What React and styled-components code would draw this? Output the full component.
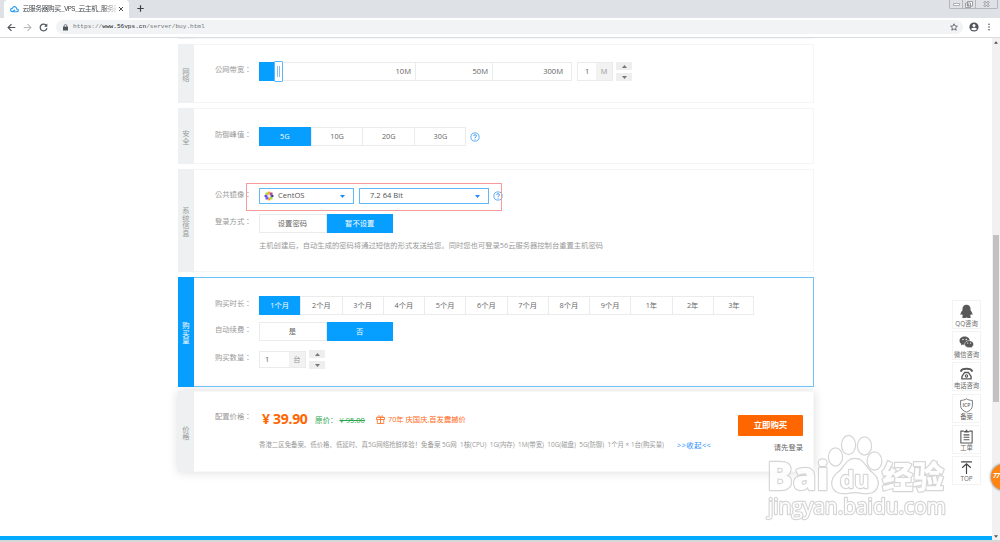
import React from 'react';
import styled, { createGlobalStyle } from 'styled-components';

const GlobalStyle = createGlobalStyle`
  body {
    margin: 0;
    overflow: hidden;
    background: #fff;
    font-family: 'Open Sans', 'Noto Sans CJK SC', sans-serif;
    font-size: 7.3px;
    line-height: 1;
    color: #666;
  }
  * {
    box-sizing: border-box;
  }
  svg {
    display: block;
    flex: none;
  }
`;

const Window = styled.div`
  position: relative;
  width: 1000px;
  height: 542px;
  overflow: hidden;
  display: flex;
  flex-direction: column;
`;

/* browser chrome */

const TabStrip = styled.div`
  height: 18px;
  flex: none;
  background: #dee1e6;
  display: flex;
  align-items: flex-start;
`;

const Tab = styled.div`
  margin-left: 4px;
  width: 125px;
  height: 18px;
  padding: 0 5px 0 6px;
  border-radius: 4px 4px 0 0;
  background: #fff;
  display: flex;
  align-items: center;
  justify-content: space-between;
`;

const TabTitle = styled.span`
  width: 94px;
  padding-left: 1px;
  white-space: nowrap;
  line-height: 12px;
  font-family: 'Liberation Mono', 'Noto Sans CJK SC', monospace;
  font-size: 6.9px;
  letter-spacing: -0.55px;
  color: #45494d;
  mask-image: linear-gradient(to right, #000 86%, rgba(0, 0, 0, 0.2));
`;

const NewTab = styled.span`
  margin: 5px 0 0 8px;
`;

const WindowButtons = styled.div`
  margin-left: auto;
  margin-right: 2px;
  height: 9px;
  display: flex;
  border: 1px solid #b3b6ba;
  border-top: 0;
  border-radius: 0 0 2px 2px;
`;

const WindowButton = styled.span`
  width: ${(props) => props.$width}px;
  display: flex;
  align-items: center;
  justify-content: center;

  & + & {
    border-left: 1px solid #b3b6ba;
  }
`;

const Toolbar = styled.div`
  height: 20px;
  flex: none;
  padding: 0 7px 1px;
  border-bottom: 1px solid #dadcdd;
  background: #fff;
  display: flex;
  align-items: center;
`;

const NavIcons = styled.div`
  width: 49px;
  display: flex;
  gap: 7px;
`;

const AddressBar = styled.div`
  flex: 1;
  height: 14px;
  padding: 0 5px 0 7px;
  border-radius: 7px;
  background: #f1f3f4;
  display: flex;
  align-items: center;
`;

const Url = styled.span`
  margin-left: 5px;
  padding-top: 1px;
  flex: 1;
  font-family: 'Liberation Mono', monospace;
  font-size: 6.1px;
  color: #6f757a;

  b {
    font-weight: 400;
    color: #202124;
  }
`;

const ToolbarIcons = styled.div`
  margin-left: 6px;
  display: flex;
  align-items: center;
  gap: 6px;
`;

/* page */

const Page = styled.div`
  flex: 1;
  min-height: 0;
  display: flex;
`;

const Viewport = styled.div`
  flex: 1;
  display: flex;
  flex-direction: column;
  overflow: hidden;
`;

const Content = styled.div`
  flex: 1;
  width: 636px;
  margin-left: 178px;
`;

const FooterBar = styled.div`
  height: 4px;
  background: #00aaff;
`;

const Taskbar = styled.div`
  height: 2px;
  flex: none;
  background: #d6d7d7;
`;

const Scrollbar = styled.div`
  width: 8px;
  background: #f1f1f1;
  display: flex;
  flex-direction: column;
  align-items: center;
  justify-content: space-between;
  padding: 3px 0 2px;
`;

const ScrollThumb = styled.div`
  width: 6px;
  height: 167px;
  margin-top: 58px;
  background: #c1c1c1;
`;

const PanelStub = styled.div`
  height: 1px;
  margin-bottom: 5px;
  border-left: 16px solid #edf1f1;
  background: #f7f7f7;
`;

const Panel = styled.section`
  height: ${(props) => props.$height}px;
  margin-bottom: ${(props) => props.$gap || 5}px;
  display: flex;
  background: #fff;
  box-shadow: ${(props) => (props.$raised ? '0 0 10px rgba(0, 0, 0, 0.14)' : 'none')};
`;

const PanelTitle = styled.div`
  width: 16px;
  flex: none;
  display: flex;
  align-items: center;
  justify-content: center;
  text-align: center;
  padding: 3px 4px 0;
  line-height: 7.5px;
  word-break: break-all;
  background: ${(props) => (props.$active ? '#069eff' : '#edf1f1')};
  color: ${(props) => (props.$active ? '#fff' : '#999')};
`;

const PanelBody = styled.div`
  position: relative;
  flex: 1;
  padding: ${(props) => props.$top}px 0 0 20px;
  border: 1px solid ${(props) => (props.$active ? '#6cc4fa' : '#f5f5f5')};
  border-left: 0;
`;

const Row = styled.div`
  height: ${(props) => props.$height || 19}px;
  margin-bottom: ${(props) => props.$gap || 0}px;
  display: flex;
  align-items: center;
`;

/* the TC face centres the full-width colon */
const Label = styled.span`
  width: 45px;
  flex: none;
  padding: 0 0 3px 1px;
  font-family: 'Noto Sans CJK TC', sans-serif;
  white-space: nowrap;
  color: #999;
`;

const ButtonGroup = styled.div`
  height: 100%;
  display: flex;
  border: 1px solid #ebebeb;
`;

const OptionButton = styled.div`
  width: ${(props) => props.$width}px;
  margin: -1px 0;
  display: flex;
  align-items: center;
  justify-content: center;
  color: ${(props) => (props.$selected ? '#fff' : '#666')};
  background: ${(props) => (props.$selected ? '#069eff' : 'transparent')};

  &:first-child {
    margin-left: -1px;
  }
  &:last-child {
    margin-right: -1px;
  }
  & + & {
    border-left: 1px solid ${(props) => (props.$selected ? '#069eff' : '#ebebeb')};
  }
`;

const Slider = styled.div`
  width: 313px;
  height: 19px;
  border: 1px solid #ebebeb;
  display: flex;
  align-items: center;
`;

const SliderFill = styled.div`
  width: 16px;
  height: 19px;
  margin-left: -1px;
  background: #069eff;
`;

const SliderHandle = styled.div`
  width: 9px;
  height: 21px;
  margin-left: -1px;
  border: 1px solid #5eb6f8;
  border-radius: 1px;
  background: #fff;
  display: flex;
  align-items: center;
  justify-content: center;
  gap: 1px;

  &::before,
  &::after {
    content: '';
    width: 1px;
    height: 11px;
    background: #8dbcf0;
  }
`;

const SliderStop = styled.div`
  width: ${(props) => props.$width}px;
  height: 17px;
  padding: 1px ${(props) => props.$pad || 4}px 0 0;
  display: flex;
  align-items: center;
  justify-content: flex-end;
  font-size: 7.6px;

  & + & {
    border-left: 1px solid #ebebeb;
  }
`;

const NumberBox = styled.div`
  width: ${(props) => props.$width}px;
  height: ${(props) => props.$height}px;
  margin-left: ${(props) => props.$left || 0}px;
  border: 1px solid #ebebeb;
  display: flex;
`;

const NumberValue = styled.span`
  flex: 1;
  display: flex;
  align-items: center;
  padding: 1px 0 0 ${(props) => props.$pad}px;
  font-size: 7.6px;
`;

const NumberUnit = styled.span`
  width: 16px;
  display: flex;
  align-items: center;
  justify-content: center;
  background: #f2f2f2;
  color: #999;
`;

const Steppers = styled.div`
  margin-left: 3px;
  display: flex;
  flex-direction: column;
  gap: 3px;
`;

const Step = styled.div`
  width: 16px;
  height: 8px;
  background: #eee;
  display: flex;
  align-items: center;
  justify-content: center;
`;

const Select = styled.div`
  width: ${(props) => props.$width}px;
  height: 16px;
  margin-right: 5px;
  padding: 0 8px 0 ${(props) => props.$pad}px;
  border: 1px solid #5fbbf7;
  display: flex;
  align-items: center;
  gap: 4px;
  font-size: 7.6px;
  color: #555;

  svg:last-child {
    margin-left: auto;
  }
`;

const Hint = styled.p`
  margin: 9px 0 0 45px;
  font-size: 7.31px;
  white-space: nowrap;
  color: #999;
`;

/* red frame drawn round the image pickers */
const Highlight = styled.div`
  position: absolute;
  left: 52px;
  top: 13px;
  width: 256px;
  height: 28px;
  border: 1px solid #f79a9a;
`;

const PriceBody = styled(PanelBody)`
  display: flex;
  justify-content: space-between;
  padding-right: 10px;
  border-color: #f8f8f8;
`;

const PriceRow = styled(Row)`
  color: #ff6a1a;
`;

const Price = styled.strong`
  width: 56px;
  padding-left: 3px;
  font-size: 14px;
  letter-spacing: -0.3px;
  white-space: nowrap;
  color: #ff6600;
`;

const OriginalPrice = styled.span`
  width: 61px;
  padding-top: 4px;
  white-space: nowrap;
  font-size: 7.5px;
  color: #2ba64b;
`;

const Promo = styled.span`
  padding-top: 2px;
  display: flex;
  align-items: center;
  gap: 3px;
  white-space: nowrap;
`;

const Summary = styled.div`
  margin: 14px 0 0 45px;
  display: flex;
  align-items: center;
  white-space: pre;
  font-size: 6.42px;
  color: #999;
`;

const SummaryText = styled.span`
  width: 418px;
`;

const Collapse = styled.span`
  font-size: 7.3px;
  letter-spacing: 0.5px;
  color: #1a8cff;
`;

const Checkout = styled.div`
  padding-top: 6px;
  display: flex;
  flex-direction: column;
  align-items: flex-end;
`;

const BuyButton = styled.div`
  width: 65px;
  height: 21px;
  margin-bottom: 8px;
  border-radius: 1px;
  background: #ff6600;
  color: #fff;
  font-size: 8.4px;
  font-weight: 700;
  display: flex;
  align-items: center;
  justify-content: center;
`;

/* floating parts */

const SideMenu = styled.div`
  position: absolute;
  left: 952px;
  top: 300px;
  display: flex;
  flex-direction: column;
  gap: 2.2px;
`;

const SideItem = styled.div`
  width: 29px;
  height: 29px;
  padding-top: 3px;
  border: 1px solid #f3f3f3;
  background: #fff;
  display: flex;
  flex-direction: column;
  align-items: center;
  gap: 1.5px;
  font-size: 6.3px;
  white-space: nowrap;
  color: #666;
`;

const Badge = styled.div`
  position: absolute;
  left: 991px;
  top: 464px;
  width: 26px;
  height: 26px;
  padding: 9px 0 0 2px;
  border-radius: 50%;
  background: #ff8412;
  box-shadow: 0 0 2px 1px rgba(90, 90, 90, 0.5);
  font-size: 6.5px;
  font-style: italic;
  font-weight: 700;
  letter-spacing: -0.3px;
  color: #fff;
`;

const Watermark = styled.svg`
  position: absolute;
  left: 760px;
  top: 428px;
  opacity: 0.85;
`;

const HelpIcon = ({ left = 0 }) => (
  <svg width='10' height='10' viewBox='0 0 10 10' style={{ marginLeft: left }}>
    <circle cx='5' cy='5' r='4.1' fill='none' stroke='#4aa5f5' strokeWidth='0.9' />
    <path
      d='M3.7 4.1c0-1.9 2.7-1.8 2.7-.1C6.4 5 5 4.9 5 6.1M5 6.8v.8'
      fill='none'
      stroke='#2f8fe8'
      strokeWidth='1'
    />
  </svg>
);

const Caret = ({ up, color = '#777', size = 5 }) => (
  <svg width={size} height='3' viewBox='0 0 6 3.6'>
    <path d={up ? 'M0 3.6L3 0l3 3.6z' : 'M0 0h6L3 3.6z'} fill={color} />
  </svg>
);

const StepperPair = () => (
  <Steppers>
    <Step>
      <Caret up />
    </Step>
    <Step>
      <Caret />
    </Step>
  </Steppers>
);

const CentosIcon = () => (
  <svg width='10' height='10' viewBox='0 0 20 20'>
    <path d='M10 0l3 3.500L10 8 7 3.500z' fill='#f0a030' />
    <path d='M20 10l-3.500 3L12 10l4.500-3z' fill='#3c3bb0' />
    <path d='M10 20l-3-3.500L10 12l3 4.500z' fill='#f0a030' />
    <path d='M0 10l3.500-3L8 10l-4.500 3z' fill='#6a3fe0' />
    <path d='M3 3h4.500l1.500 6L3 7.500z' fill='#a8dc3a' />
    <path d='M17 3v4.500L11 9l1.500-6z' fill='#b04aa0' />
    <path d='M17 17h-4.500L11 11l6 1.500z' fill='#a8dc3a' />
    <path d='M3 17v-4.500L9 11l-1.500 6z' fill='#6a5cf0' />
  </svg>
);

const GiftIcon = () => (
  <svg width='9' height='9' viewBox='0 0 18 18' fill='none' stroke='#ff6a1a' strokeWidth='1.6'>
    <path d='M1 5h16v4H1zM2.500 9v8h13V9M9 5v12M9 5C7-.5 3 .8 4.500 5M9 5c2-5.500 6-4.200 4.500 0' />
  </svg>
);

const sideItems = [
  {
    text: 'QQ咨询',
    icon: (
      <path
        d='M14 1.500c-4.800 0-7.500 3.200-7.500 7.500v2.500C4.500 14 2.500 17 2.900 20c.2 1 1.400.2 2.600-1.200.4 1.600 1.200 2.800 2.200 3.700-2.800 1-2.500 3.500.5 3.500 2.300 0 4.500-.3 5.800-1 1.300.7 3.500 1 5.800 1 3 0 3.300-2.500.5-3.500 1-.9 1.800-2.100 2.200-3.700 1.200 1.400 2.400 2.200 2.600 1.200.4-3-1.600-6-3.600-8.500V9c0-4.300-2.700-7.500-7.500-7.500z'
        fill='#595959'
      />
    ),
  },
  {
    text: '微信咨询',
    icon: (
      <g>
        <path
          d='M10.500 3C5 3 1 6.400 1 10.700c0 2.500 1.300 4.500 3.400 6L3.500 19.500l3.400-1.700c1.300.4 2.400.5 3.600.5C16 18.300 20 15 20 10.700S16 3 10.500 3z'
          fill='#595959'
        />
        <path
          d='M19 10.500c-4.800 0-8.500 2.900-8.500 6.600s3.700 6.600 8.500 6.600c1 0 2-.2 2.900-.5l3 1.600-.8-2.500c2-1.300 3.200-3.100 3.200-5.200 0-3.700-3.500-6.600-8.300-6.600z'
          fill='#595959'
          stroke='#fff'
        />
        <g fill='#fff'>
          <circle cx='7.500' cy='8.500' r='1.300' />
          <circle cx='13.500' cy='8.500' r='1.300' />
          <circle cx='16.300' cy='15' r='1.100' />
          <circle cx='21.600' cy='15' r='1.100' />
        </g>
      </g>
    ),
  },
  {
    text: '电话咨询',
    icon: (
      <g fill='none' stroke='#595959'>
        <path d='M4 10.500V8.500C7 4 21 4 24 8.500v2' strokeWidth='3.600' />
        <path d='M10.500 12h7l5 7.500V24h-17v-4.500z' strokeWidth='2.600' />
        <circle cx='14' cy='18.500' r='2.200' strokeWidth='2.200' />
      </g>
    ),
  },
  {
    text: '备案',
    icon: (
      <g fill='none' stroke='#666' strokeWidth='1.600'>
        <path d='M14 1.500c3 2.200 7 3 11 3V14c0 6-4.500 10-11 12.500C7.500 24 3 20 3 14V4.500c4 0 8-.8 11-3z' />
        <text
          x='14'
          y='17'
          textAnchor='middle'
          fontSize='9.500'
          fontWeight='600'
          fill='#666'
          stroke='none'
        >
          ICP
        </text>
      </g>
    ),
  },
  {
    text: '工单',
    icon: (
      <g fill='none' stroke='#555' strokeWidth='2'>
        <path d='M9 4H3.500v22h21V4H19M8.500 11h11M8.500 15.500h11M8.500 20h11' />
        <path d='M9.500 6.500V3.500h3V1.500h3v2h3v3z' fill='#555' stroke='none' />
      </g>
    ),
  },
  {
    text: 'TOP',
    icon: (
      <path
        d='M4 3.500h20M14 26V7M6 14.500L14 7l8 7.500'
        fill='none'
        stroke='#444'
        strokeWidth='2.200'
      />
    ),
  },
];

const months = ['1个月', '2个月', '3个月', '4个月', '5个月', '6个月', '7个月', '8个月', '9个月', '1年', '2年', '3年'];

function Options({ items, selected, width }) {
  return (
    <ButtonGroup>
      {items.map((item) => (
        <OptionButton key={item} $width={width} $selected={item === selected}>
          {item}
        </OptionButton>
      ))}
    </ButtonGroup>
  );
}

function BrowserChrome() {
  return (
    <>
      <TabStrip>
        <Tab>
          <svg width='9' height='8' viewBox='0 0 18 14' fill='none' stroke='#2a9df4' strokeWidth='2.4'>
            <path d='M5 12.500h9c4-1 3-6-.5-5.500C13 1 6 .5 5 5.500c-5 0-5 6.500 0 7l5-4' />
          </svg>
          <TabTitle>云服务器购买_VPS_云主机_服务器</TabTitle>
          <svg width='6' height='6' viewBox='0 0 6 6' stroke='#4d5156' strokeWidth='1'>
            <path d='M1 1l4 4M5 1L1 5' />
          </svg>
        </Tab>
        <NewTab>
          <svg width='7' height='7' viewBox='0 0 7 7' stroke='#3c4043' strokeWidth='1.200'>
            <path d='M3.500 .3v6.400M.3 3.500h6.400' />
          </svg>
        </NewTab>
        <WindowButtons>
          <WindowButton $width={12}>
            <svg width='7' height='3' viewBox='0 0 7 3' fill='#fff' stroke='#8a8d91' strokeWidth='.7'>
              <rect x='.4' y='.4' width='6.200' height='2.200' rx='.6' />
            </svg>
          </WindowButton>
          <WindowButton $width={13}>
            <svg width='8' height='7' viewBox='0 0 8 7' fill='#fff' stroke='#8a8d91' strokeWidth='.8'>
              <path d='M2.500.5h5v4.500h-5zM.5 2h5v4.500h-5zM2 3.500h2v1.500H2z' />
            </svg>
          </WindowButton>
          <WindowButton $width={22}>
            <svg width='7' height='6' viewBox='0 0 7 6' fill='none'>
              <path d='M1 .5l5 5M6 .5l-5 5' stroke='#8a8d91' strokeWidth='2.200' />
              <path d='M1 .5l5 5M6 .5l-5 5' stroke='#fff' strokeWidth='1' />
            </svg>
          </WindowButton>
        </WindowButtons>
      </TabStrip>
      <Toolbar>
        <NavIcons>
          <svg width='9' height='9' viewBox='0 0 9 9' fill='none' stroke='#50545a' strokeWidth='1.200'>
            <path d='M8.300 4.500H1.200M4.500 1.100L1.100 4.500l3.400 3.400' />
          </svg>
          <svg width='9' height='9' viewBox='0 0 9 9' fill='none' stroke='#b9bbbe' strokeWidth='1.100'>
            <path d='M.7 4.500h7.100M4.500 1.100l3.400 3.400-3.400 3.400' />
          </svg>
          <svg width='9' height='9' viewBox='0 0 9 9' fill='none' stroke='#50545a' strokeWidth='1.200'>
            <path d='M7.400 2.600A3.400 3.400 0 1 0 7.900 5.200' />
            <path d='M8.300.6v3.200H5.100z' fill='#50545a' stroke='none' />
          </svg>
        </NavIcons>
        <AddressBar>
          <svg width='5' height='7' viewBox='0 0 5 7'>
            <path d='M0 2.600h5V6.500H0z' fill='#50545a' />
            <path d='M1.200 3V1.800a1.300 1.300 0 0 1 2.600 0V3' fill='none' stroke='#50545a' strokeWidth='.7' />
          </svg>
          <Url>
            https://<b>www.56vps.cn</b>/server/buy.html
          </Url>
          <svg width='8' height='8' viewBox='0 0 8 8' fill='none' stroke='#50545a' strokeWidth='.8'>
            <path d='M4 .8l1 2.200 2.400.2-1.800 1.600.6 2.400L4 6 1.800 7.200l.6-2.400L.6 3.200 3 3z' />
          </svg>
        </AddressBar>
        <ToolbarIcons>
          <svg width='10' height='10' viewBox='0 0 10 10'>
            <circle cx='5' cy='5' r='4.600' fill='#50545a' />
            <circle cx='5' cy='3.500' r='1.500' fill='#fff' />
            <path d='M2 7c1-1.600 5-1.600 6 0-1 1.800-5 1.800-6 0z' fill='#fff' />
          </svg>
          <svg width='8' height='8' viewBox='0 0 8 8' fill='#50545a'>
            <circle cx='4' cy='1.200' r='.8' />
            <circle cx='4' cy='4' r='.8' />
            <circle cx='4' cy='6.800' r='.8' />
          </svg>
        </ToolbarIcons>
      </Toolbar>
    </>
  );
}

function App() {
  return (
    <Window>
      <GlobalStyle />
      <BrowserChrome />
      <Page>
        <Viewport>
          <Content>
            <PanelStub />

            <Panel $height={59}>
              <PanelTitle>网络</PanelTitle>
              <PanelBody $top={17}>
                <Row>
                  <Label>公网带宽：</Label>
                  <Slider>
                    <SliderFill />
                    <SliderHandle />
                    <SliderStop $width={132}>10M</SliderStop>
                    <SliderStop $width={77}>50M</SliderStop>
                    <SliderStop $width={79} $pad={8}>
                      300M
                    </SliderStop>
                  </Slider>
                  <NumberBox $width={36} $height={19} $left={5}>
                    <NumberValue $pad={7}>1</NumberValue>
                    <NumberUnit>M</NumberUnit>
                  </NumberBox>
                  <StepperPair />
                </Row>
              </PanelBody>
            </Panel>

            <Panel $height={56}>
              <PanelTitle>安全</PanelTitle>
              <PanelBody $top={18}>
                <Row>
                  <Label>防御峰值：</Label>
                  <Options items={['5G', '10G', '20G', '30G']} selected='5G' width={51.7} />
                  <HelpIcon left={4} />
                </Row>
              </PanelBody>
            </Panel>

            <Panel $height={103}>
              <PanelTitle>系统信息</PanelTitle>
              <PanelBody $top={18}>
                <Row $height={16} $gap={10}>
                  <Label>公共镜像：</Label>
                  <Select $width={95} $pad={4}>
                    <CentosIcon />
                    CentOS
                    <Caret color='#1a8cff' />
                  </Select>
                  <Select $width={130} $pad={10}>
                    7.2 64 Bit
                    <Caret color='#1a8cff' />
                  </Select>
                  <HelpIcon left={-1} />
                </Row>
                <Highlight />
                <Row>
                  <Label>登录方式：</Label>
                  <Options items={['设置密码', '暂不设置']} selected='暂不设置' width={66.8} />
                </Row>
                <Hint>主机创建后，自动生成的密码将通过短信的形式发送给您。同时您也可登录56云服务器控制台重置主机密码</Hint>
              </PanelBody>
            </Panel>

            <Panel $height={110} $gap={4}>
              <PanelTitle $active>购买量</PanelTitle>
              <PanelBody $active $top={18}>
                <Row $gap={7}>
                  <Label>购买时长：</Label>
                  <Options items={months} selected='1个月' width={41.25} />
                </Row>
                <Row $gap={9}>
                  <Label>自动续费：</Label>
                  <Options items={['是', '否']} selected='否' width={66.8} />
                </Row>
                <Row>
                  <Label>购买数量：</Label>
                  <NumberBox $width={47} $height={17}>
                    <NumberValue $pad={5}>1</NumberValue>
                    <NumberUnit>台</NumberUnit>
                  </NumberBox>
                  <StepperPair />
                </Row>
              </PanelBody>
            </Panel>

            <Panel $height={81} $raised>
              <PanelTitle>价格</PanelTitle>
              <PriceBody $top={17}>
                <div>
                  <PriceRow>
                    <Label>配置价格：</Label>
                    <Price>¥ 39.90</Price>
                    <OriginalPrice>
                      原价： <s>¥ 95.00</s>
                    </OriginalPrice>
                    <Promo>
                      <GiftIcon />
                      70年 庆国庆,首发震撼价
                    </Promo>
                  </PriceRow>
                  <Summary>
                    <SummaryText>
                      {'香港二区免备案、低价格、低延时、真5G网络抢鲜体验！免备案 5G网  1核(CPU)  1G(内存)  1M(带宽)  10G(磁盘)  5G(防御)  1个月 × 1台(购买量)'}
                    </SummaryText>
                    <Collapse>&gt;&gt;收起&lt;&lt;</Collapse>
                  </Summary>
                </div>
                <Checkout>
                  <BuyButton>立即购买</BuyButton>
                  <span>请先登录</span>
                </Checkout>
              </PriceBody>
            </Panel>
          </Content>
          <FooterBar />
        </Viewport>
        <Scrollbar>
          <Caret up color='#505050' size={4} />
          <ScrollThumb />
          <Caret color='#505050' size={4} />
        </Scrollbar>
      </Page>
      <Taskbar />

      <SideMenu>
        {sideItems.map((item) => (
          <SideItem key={item.text}>
            <svg width='15' height='15' viewBox='0 0 28 28'>
              {item.icon}
            </svg>
            {item.text}
          </SideItem>
        ))}
      </SideMenu>

      <Watermark width='190' height='96' viewBox='0 0 190 96'>
        <g
          fill='#fff'
          stroke='#cfcfcf'
          strokeWidth='2.4'
          strokeLinejoin='round'
          paintOrder='stroke'
          fontFamily="'Open Sans', 'Noto Sans CJK SC', sans-serif"
          fontWeight='800'
        >
          <text x='7' y='62' fontSize='39' textLength='62' lengthAdjust='spacingAndGlyphs'>
            Bai
          </text>
          <ellipse cx='75.500' cy='29' rx='6.500' ry='8.500' />
          <ellipse cx='88.500' cy='17' rx='6.500' ry='9' />
          <ellipse cx='104.500' cy='18' rx='6.500' ry='8.500' />
          <ellipse cx='114.500' cy='33' rx='6.800' ry='8.500' />
          <path d='M95 31c-9 0-10 9-17 14-9 7-7 19 4 20 6 .5 8-1 13-1s7 1.500 13 1c11-1 13-13 4-20-7-5-8-14-17-14z' />
          <text x='80' y='60' fontSize='23' fontWeight='700' textLength='29' lengthAdjust='spacingAndGlyphs'>
            du
          </text>
          <text x='122' y='60' fontSize='31' textLength='62'>
            经验
          </text>
          <text x='8' y='86' fontSize='21' fontWeight='400' textLength='178' lengthAdjust='spacingAndGlyphs'>
            jingyan.baidu.com
          </text>
        </g>
      </Watermark>

      <Badge>77</Badge>
    </Window>
  );
}

export default App;
